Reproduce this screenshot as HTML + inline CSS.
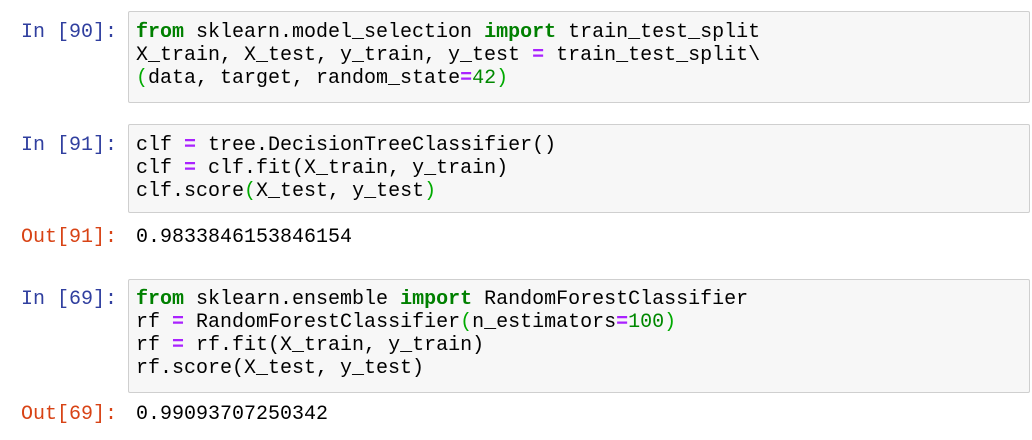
<!DOCTYPE html>
<html><head><style>
body{margin:0;width:1032px;height:440px;background:#fff;font-family:"Liberation Mono",monospace;font-size:20px;position:relative;overflow:hidden}
.box{position:absolute;left:128px;width:900px;background:#f7f7f7;border:1px solid #cfcfcf;border-radius:2px}
.l{position:absolute;left:136px;white-space:pre;line-height:23px;color:#000}
.p{position:absolute;right:915px;white-space:pre;line-height:23px;color:#303F9F}
.o{color:#D84315}
.k{color:#008000;font-weight:bold}
.op{color:#AA22FF;font-weight:bold}
.g{color:#00aa00}
.n{color:#080}
</style></head><body>
<div class="box" style="top:11px;height:90px"></div>
<div class="p" style="top:21px">In [90]:</div>
<div class="l" style="top:21px"><span class="k">from</span> sklearn.model_selection <span class="k">import</span> train_test_split
X_train, X_test, y_train, y_test <span class="op">=</span> train_test_split\
<span class="g">(</span>data, target, random_state<span class="op">=</span><span class="n">42</span><span class="g">)</span></div>

<div class="box" style="top:124px;height:87px"></div>
<div class="p" style="top:134px">In [91]:</div>
<div class="l" style="top:134px">clf <span class="op">=</span> tree.DecisionTreeClassifier()
clf <span class="op">=</span> clf.fit(X_train, y_train)
clf.score<span class="g">(</span>X_test, y_test<span class="g">)</span></div>
<div class="p o" style="top:226px">Out[91]:</div>
<div class="l" style="top:226px">0.9833846153846154</div>

<div class="box" style="top:279px;height:112px"></div>
<div class="p" style="top:288px">In [69]:</div>
<div class="l" style="top:288px"><span class="k">from</span> sklearn.ensemble <span class="k">import</span> RandomForestClassifier
rf <span class="op">=</span> RandomForestClassifier<span class="g">(</span>n_estimators<span class="op">=</span><span class="n">100</span><span class="g">)</span>
rf <span class="op">=</span> rf.fit(X_train, y_train)
rf.score(X_test, y_test)</div>
<div class="p o" style="top:403px">Out[69]:</div>
<div class="l" style="top:403px">0.99093707250342</div>
</body></html>
